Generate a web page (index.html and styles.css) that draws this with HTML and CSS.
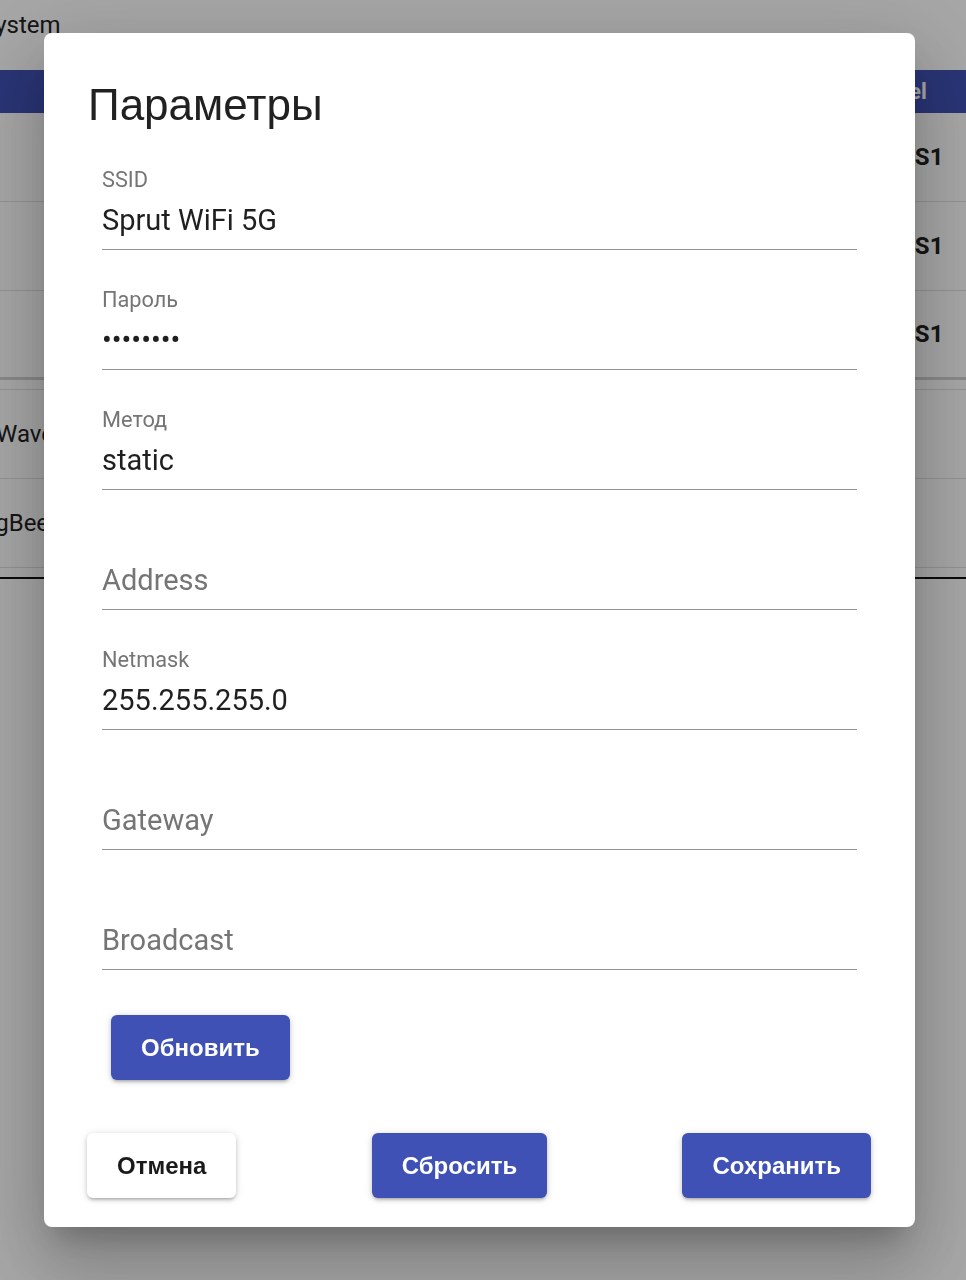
FILE: index.html
```html
<!DOCTYPE html>
<html lang="ru">
<head>
  <meta charset="UTF-8">
  <title>Параметры</title>
  <link rel="stylesheet" href="styles.css">
</head>
<body>
  <div class="page">
    <div class="page-title">System</div>

    <div class="grid">
      <div class="row head">
        <div class="cell icon"></div>
        <div class="cell name">Интерфейс</div>
        <div class="cell model">Model</div>
      </div>
      <div class="row">
        <div class="cell icon"></div>
        <div class="cell name">wlan0</div>
        <div class="cell model">Hub S1</div>
      </div>
      <div class="row">
        <div class="cell icon"></div>
        <div class="cell name">wlan1</div>
        <div class="cell model">Hub S1</div>
      </div>
      <div class="row last">
        <div class="cell icon"></div>
        <div class="cell name">eth0</div>
        <div class="cell model">Hub S1</div>
      </div>
    </div>

    <div class="grid second">
      <div class="row">
        <div class="cell proto">Z-Wave</div>
      </div>
      <div class="row">
        <div class="cell proto">ZigBee</div>
      </div>
    </div>
    <div class="divider"></div>
  </div>

  <div class="overlay">
    <div class="dialog">
      <h2 class="dialog-title">Параметры</h2>

      <div class="fields">
        <div class="field">
          <label for="ssid">SSID</label>
          <input id="ssid" type="text" value="Sprut WiFi 5G">
        </div>
        <div class="field">
          <label for="pass">Пароль</label>
          <input id="pass" type="password" value="12345678">
        </div>
        <div class="field">
          <label for="method">Метод</label>
          <input id="method" type="text" value="static">
        </div>
        <div class="field empty">
          <input id="address" type="text" placeholder="Address" aria-label="Address">
        </div>
        <div class="field">
          <label for="netmask">Netmask</label>
          <input id="netmask" type="text" value="255.255.255.0">
        </div>
        <div class="field empty">
          <input id="gateway" type="text" placeholder="Gateway" aria-label="Gateway">
        </div>
        <div class="field empty">
          <input id="broadcast" type="text" placeholder="Broadcast" aria-label="Broadcast">
        </div>
      </div>

      <button class="btn primary refresh">Обновить</button>

      <div class="actions">
        <button class="btn plain">Отмена</button>
        <button class="btn primary">Сбросить</button>
        <button class="btn primary">Сохранить</button>
      </div>
    </div>
  </div>
</body>
</html>
```

FILE: styles.css
```css
body {
  margin: 0;
  height: 1280px;
  overflow: hidden;
  background: #ffffff;
  font-family: Roboto, "Noto Sans", sans-serif;
}

/* page behind the dialog */
.page {
  margin-left: -35px;
  width: 1040px;
  color: #212121;
}

.page-title {
  font-size: 24px;
  line-height: 32px;
  padding: 9px 16px 29px;
}

.row {
  display: flex;
  align-items: center;
  height: 89px;
  box-sizing: border-box;
  border-bottom: 1px solid #e0e0e0;
}

.row.head {
  height: 43px;
  background: #3f51b5;
  color: #ffffff;
  font-weight: bold;
  font-size: 22px;
  border-bottom: none;
}

.row.last {
  border-bottom: 3px solid #d2d2d2;
}

.cell {
  padding: 0 16px;
}

.icon {
  width: 80px;
}

.name {
  flex: 1;
  font-size: 24px;
}

.head .name {
  font-size: 22px;
}

.model {
  width: 124px;
  font-size: 24px;
  font-weight: bold;
}

.head .model {
  font-size: 22px;
}

.grid.second {
  margin-top: 9px;
  border-top: 1px solid #e0e0e0;
}

.proto {
  padding-left: 10px;
  font-size: 24px;
}

.divider {
  margin-top: 9px;
  height: 2px;
  background: #111111;
}

/* dialog */
.overlay {
  position: fixed;
  inset: 0;
  background: rgba(0, 0, 0, 0.35);
  padding: 33px 0 0 44px;
}

.dialog {
  width: 871px;
  box-sizing: border-box;
  padding: 47px 44px 29px 43px;
  background: #ffffff;
  border-radius: 8px;
  box-shadow: 0 20px 26px -12px rgba(0, 0, 0, 0.2),
              0 42px 66px 5px rgba(0, 0, 0, 0.14),
              0 16px 80px 14px rgba(0, 0, 0, 0.12);
}

.dialog-title {
  margin: 0 0 0 1px;
  font-family: "Liberation Sans", Arial, sans-serif;
  font-weight: normal;
  font-size: 44px;
  line-height: 50px;
  color: #212121;
}

.fields {
  margin: 0 14px 0 15px;
}

.field {
  display: flex;
  flex-direction: column;
  height: 120px;
  box-sizing: border-box;
  padding-top: 38px;
  border-bottom: 1px solid #949494;
}

.field.empty {
  padding-top: 73px;
}

.field label {
  font-size: 21.75px;
  line-height: 24px;
  color: #757575;
  margin-bottom: 11px;
}

.field input {
  border: 0;
  outline: 0;
  padding: 0;
  margin: 0;
  width: 100%;
  height: 34px;
  font-family: Roboto, sans-serif;
  font-size: 29px;
  line-height: 34px;
  color: #1f1f1f;
  background: transparent;
}

.field input::placeholder {
  color: #757575;
  opacity: 1;
}

.btn {
  height: 65px;
  padding: 0 30px;
  border: none;
  border-radius: 6px;
  font-family: "Liberation Sans", Arial, sans-serif;
  font-weight: bold;
  font-size: 24px;
  cursor: pointer;
  box-shadow: 0 3px 3px -2px rgba(0, 0, 0, 0.2),
              0 2px 4px 0 rgba(0, 0, 0, 0.14),
              0 1px 8px 0 rgba(0, 0, 0, 0.12);
}

.btn.primary {
  background-color: #3f51b5;
  color: #ffffff;
}

.btn.plain {
  background-color: #ffffff;
  color: #1a1a1a;
}

.refresh {
  margin: 45px 0 0 24px;
}

.actions {
  display: flex;
  justify-content: space-between;
  margin-top: 53px;
}
```
